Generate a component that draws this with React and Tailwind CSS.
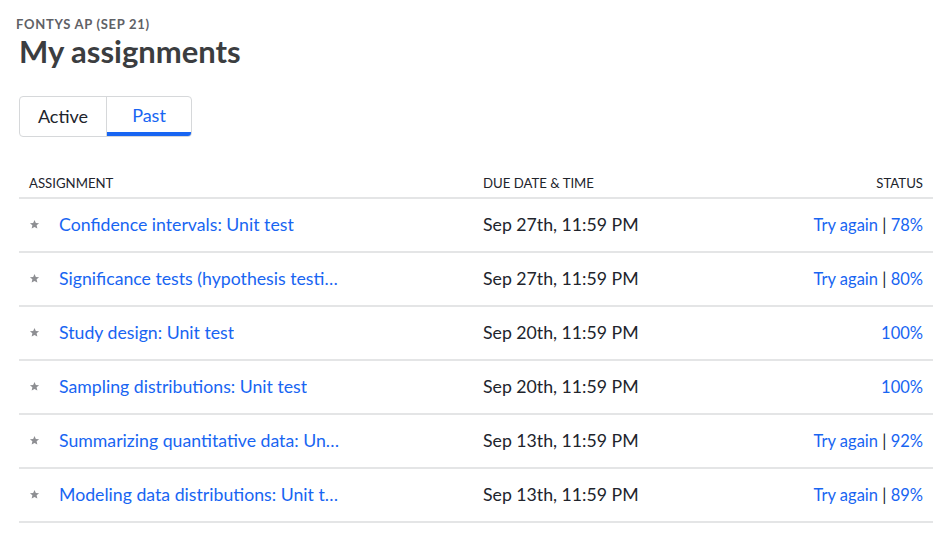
import React from "react";

const rows = [
  { title: "Confidence intervals: Unit test", date: "Sep 27th, 11:59 PM", retry: true, score: "78%" },
  { title: "Significance tests (hypothesis testing): Unit test", date: "Sep 27th, 11:59 PM", retry: true, score: "80%" },
  { title: "Study design: Unit test", date: "Sep 20th, 11:59 PM", retry: false, score: "100%" },
  { title: "Sampling distributions: Unit test", date: "Sep 20th, 11:59 PM", retry: false, score: "100%" },
  { title: "Summarizing quantitative data: Unit test", date: "Sep 13th, 11:59 PM", retry: true, score: "92%" },
  { title: "Modeling data distributions: Unit test", date: "Sep 13th, 11:59 PM", retry: true, score: "89%" },
];

function Star() {
  return (
    <svg width="11" height="11" viewBox="0 0 24 24" className="shrink-0">
      <path
        d="M12 2l2.9 6.6 7.1.6-5.4 4.7 1.6 7L12 17.3 5.8 20.9l1.6-7L2 9.2l7.1-.6z"
        fill="#8e8f93"
      />
    </svg>
  );
}

export default function App() {
  return (
    <div
      className="bg-white w-[945px] h-[537px] overflow-hidden text-[#21242c]"
      style={{ fontFamily: "Lato, 'Noto Sans', sans-serif" }}
    >
      <div className="pl-[16px] pt-[16px]">
        <div className="text-[13px] font-bold tracking-[0.7px] text-[#5f6166] leading-[16px]">
          FONTYS AP (SEP 21)
        </div>
      </div>
      <div className="pl-[19px] mt-[1px]">
        <h1 className="text-[31px] font-bold leading-[36px] text-[#3b3d40]">My assignments</h1>
      </div>
      <div className="pl-[19px] mt-[27px]">
        <div className="inline-flex h-[41px] border border-[#d6d8da] rounded-[4px] overflow-hidden">
          <div className="w-[87px] flex items-center justify-center text-[18px] text-[#21242c] border-r border-[#d6d8da]">
            Active
          </div>
          <div className="w-[84px] relative flex items-center justify-center text-[18px] text-[#1865f2] pb-[2px]">
            Past
            <div className="absolute left-0 right-0 bottom-0 h-[4px] bg-[#1865f2]" />
          </div>
        </div>
      </div>
      <div className="mx-[19px] w-[914px] mt-[34px]">
        <div className="grid grid-cols-[454px_1fr_auto] items-center h-[28px] border-b-2 border-[#e4e5e6] text-[13.2px] text-[#21242c] px-[10px] pb-[1px]">
          <div className="pl-0">ASSIGNMENT</div>
          <div>DUE DATE &amp; TIME</div>
          <div className="text-right">STATUS</div>
        </div>
        {rows.map((r, i) => (
          <div
            key={i}
            className="grid grid-cols-[454px_1fr_auto] items-center h-[54px] border-b-2 border-[#e4e5e6] text-[17.7px] px-[10px]"
          >
            <div className="flex items-center">
              <div className="w-[30px] flex items-center">
                <Star />
              </div>
              <div className="max-w-[283px] truncate text-[#1865f2]">{r.title}</div>
            </div>
            <div className="text-[#21242c]">{r.date}</div>
            <div className="text-right text-[#1865f2] text-[16.5px]">
              {r.retry ? (
                <>
                  Try again <span className="text-[#21242c]">|</span> {r.score}
                </>
              ) : (
                r.score
              )}
            </div>
          </div>
        ))}
      </div>
    </div>
  );
}
